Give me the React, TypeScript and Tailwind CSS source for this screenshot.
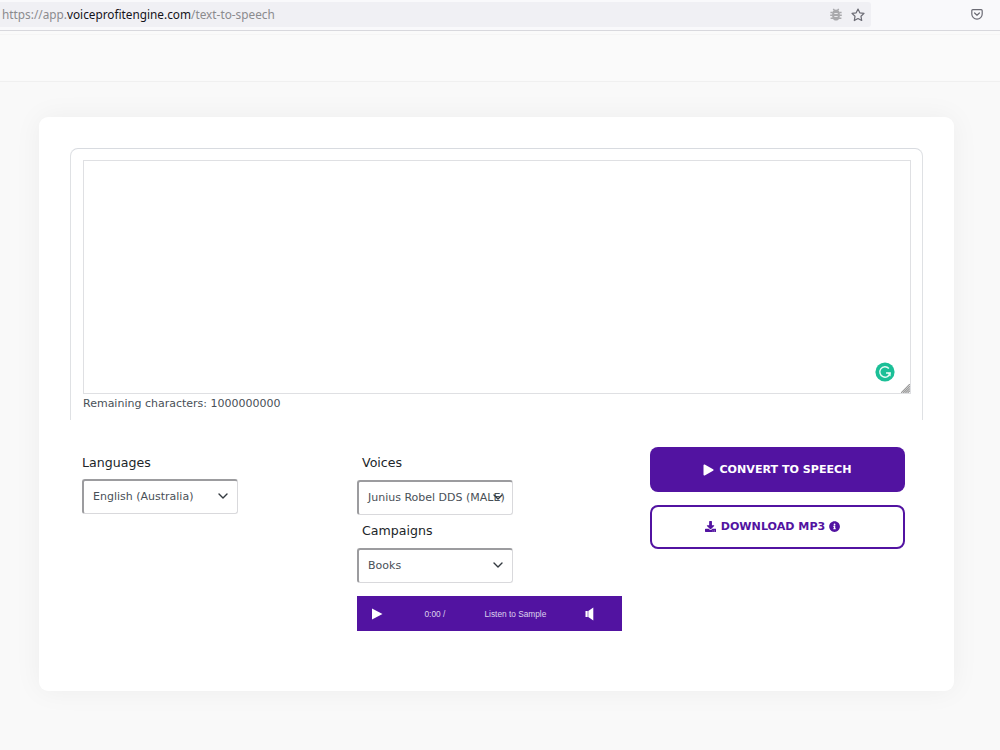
import React, { FC } from 'react';
import { FaDownload, FaInfoCircle } from 'react-icons/fa';

interface ISelectBoxProps {
  value: string;
}

const Chevron: FC = () => (
  <svg width="10" height="6" viewBox="0 0 10 6" fill="none" stroke="#343a40" strokeWidth="1.4" strokeLinecap="round" strokeLinejoin="round">
    <path d="M1 1l4 4 4-4" />
  </svg>
);

const SelectBox: FC<ISelectBoxProps> = ({ value }) => {
  return (
    <div className="relative flex h-[35px] w-[156px] items-center rounded-[3px] border-t-2 border-l-2 border-r border-b border-t-[#9c9c9f] border-l-[#9c9c9f] border-r-[#d9d9dc] border-b-[#d9d9dc] bg-white pl-[9px]">
      <span className="whitespace-nowrap text-[11px] text-[#495057]">{value}</span>
      <span className="absolute top-[12px] right-[9px]">
        <Chevron />
      </span>
    </div>
  );
};

const AddressBar: FC = () => {
  return (
    <div className="flex h-[31px] items-start border-b border-[#d8d8dd] bg-[#f9f9fb] pt-[2px]">
      <div className="flex h-[25px] w-[871px] items-center rounded-r-[3px] bg-[#f0f0f4] pl-[2px]">
        <p className="flex-1 whitespace-nowrap pt-px font-['Noto_Sans',sans-serif] text-[11.8px] text-[#8b8b8e]">
          https://app.<span className="text-[#15141a]">voiceprofitengine.com</span>/text-to-speech
        </p>
        <svg className="mr-[9px]" width="12" height="13" viewBox="0 0 12 13" fill="none" stroke="#a9a9ac" strokeWidth="1.5">
          <path d="M3.3.8l1.3 1.9M8.7.8L7.4 2.7M.4 4.4h2.4M.2 7.2h2.4M.6 10.2h2.4M9.2 4.4h2.4M9.4 7.2h2.4M9 10.2h2.4" />
          <path d="M6 1.6C3.4 1.6 2.1 3.8 2.1 7s1.3 5.6 3.9 5.6S9.9 10.2 9.9 7 8.6 1.6 6 1.6z" fill="#a9a9ac" stroke="none" />
          <path d="M4.3 5.5h3.4M4.3 8.5h3.4" stroke="#e9e9ec" strokeWidth="1" />
        </svg>
        <svg className="mr-[6px]" width="14" height="14" viewBox="0 0 14 14" fill="none" stroke="#6b6b74" strokeWidth="1.2" strokeLinejoin="round">
          <path d="M7 1l1.8 3.8 4.2.6-3 2.9.7 4.2L7 10.5l-3.7 2 .7-4.2-3-2.9 4.2-.6z" />
        </svg>
      </div>
      <svg className="mt-[7px] ml-[100px]" width="12" height="11" viewBox="0 0 12 11" fill="none" stroke="#6b6b74" strokeWidth="1.2" strokeLinecap="round" strokeLinejoin="round">
        <path d="M1.8.7h8.4c.6 0 1 .4 1 1V5a5.2 5.2 0 0 1-10.4 0V1.7c0-.6.4-1 1-1z" />
        <path d="M3.6 4L6 6.2 8.4 4" />
      </svg>
    </div>
  );
};

const AudioPlayer: FC = () => {
  return (
    <div className="mt-[13px] flex h-[35px] w-[265px] items-center bg-[#5213a1] pl-[15px] font-['Liberation_Sans',sans-serif] text-[8.3px] text-[#ded3ee]">
      <svg width="11" height="12" viewBox="0 0 11 12" fill="#fff">
        <path d="M0 .5L10.5 6 0 11.5z" />
      </svg>
      <span className="ml-[41.5px] w-[60px] whitespace-nowrap pt-px">0:00&nbsp;/</span>
      <span className="w-[100px] whitespace-nowrap pt-px">Listen to Sample</span>
      <svg width="9" height="14" viewBox="0 0 9 14" fill="#fff">
        <path d="M.5 4h2.2v6H.5zM3.3 4L8.3.5v13L3.3 10z" />
      </svg>
    </div>
  );
};

const Editor: FC = () => {
  return (
    <div className="h-[272px] rounded-t-[8px] border-x border-t border-x-[#dfe1e4] border-t-[#d8dbe0] pr-[11px] pl-[12px] pt-[11px]">
      <div className="relative h-[234px] border border-[#dfe0e3] bg-white">
        <svg className="absolute right-[15px] bottom-[11px]" width="20" height="20" viewBox="0 0 20 20" fill="none">
          <circle cx="10" cy="10" r="9.6" fill="#1bbf97" />
          <path d="M13.9 6.5A5.2 5.2 0 1 0 15.1 11H11" stroke="#e8faf5" strokeWidth="1.4" />
          <path d="M12.3 10.8h3.3v3.6z" fill="#e8faf5" />
        </svg>
        <svg className="absolute right-0 bottom-0" width="9" height="9" viewBox="0 0 9 9" stroke="#9a9a9a" strokeWidth="1.2">
          <path d="M0 9L9 0M2.2 9L9 2.2M4.4 9L9 4.4M6.6 9L9 6.6" />
        </svg>
      </div>
      <p className="mt-[2px] text-[11px] leading-[16px] text-[#495057]">Remaining characters: 1000000000</p>
    </div>
  );
};

const App: FC = () => {
  return (
    <div className="h-[750px] w-[1000px] overflow-hidden bg-[#f9f9f9] font-['DejaVu_Sans',sans-serif]">
      <AddressBar />
      <div className="h-[51px] border-b border-[#f0f0f0] bg-[#fafafa]">
        <div className="h-[4px] border-b border-[#f5f5f5]" />
      </div>
      <main className="mt-[35px] ml-[39px] h-[574px] w-[915px] rounded-[9px] bg-white px-[31px] pt-[31px] shadow-[0_0_28px_rgba(0,0,0,0.05)]">
        <div className="w-[853px]">
          <Editor />
          <div className="flex items-start pt-[27px] pl-[12px] text-[12.6px] text-[#212529]">
            <section className="w-[275px]">
              <h2 className="mt-[7px] mb-[8px] leading-[17px]">Languages</h2>
              <SelectBox value="English (Australia)" />
            </section>
            <section className="w-[293px]">
              <h2 className="mt-[7px] mb-[9px] ml-[5px] leading-[17px]">Voices</h2>
              <SelectBox value="Junius Robel DDS (MALE)" />
              <h2 className="mt-[7px] mb-[9px] ml-[5px] leading-[17px]">Campaigns</h2>
              <SelectBox value="Books" />
              <AudioPlayer />
            </section>
            <section className="w-[255px] text-[11.1px] font-bold">
              <button className="flex h-[45px] w-full items-center justify-center rounded-[8px] bg-[#5213a1] pt-px text-white">
                <svg className="mr-[5px]" width="11" height="12" viewBox="0 0 11 12" fill="#fff">
                  <path d="M.5 1.2C.5.5 1.1.2 1.7.5l8.4 4.7c.6.3.6 1.200 0 1.500l-8.4 4.700c-.6.3-1.200 0-1.200-.7z" />
                </svg>
                CONVERT TO SPEECH
              </button>
              <button className="mt-[13px] flex h-[44px] w-full items-center justify-center rounded-[8px] border-2 border-[#5213a1] pr-[10px] text-[#5213a1]">
                <FaDownload className="mr-[5px]" />
                DOWNLOAD MP3
                <FaInfoCircle className="ml-[4px]" />
              </button>
            </section>
          </div>
        </div>
      </main>
    </div>
  );
};

export default App;
